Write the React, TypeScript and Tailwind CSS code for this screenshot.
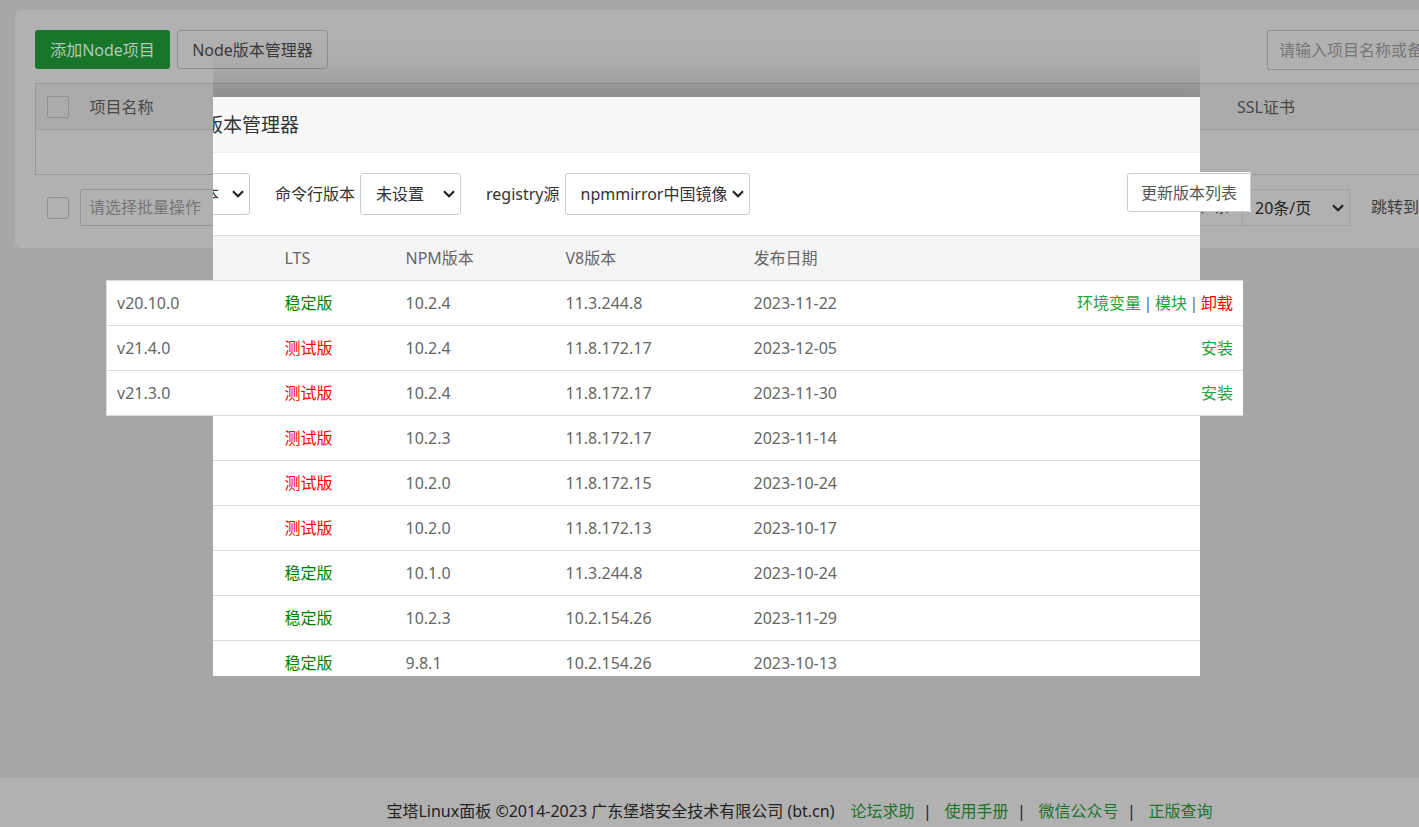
import type { ComponentProps } from "react";
import { clsx } from "clsx";

type Version = {
  name?: string;
  stable: boolean;
  npm: string;
  v8: string;
  date: string;
  installed?: boolean;
};

const versions: Version[] = [
  { name: "v20.10.0", stable: true, npm: "10.2.4", v8: "11.3.244.8", date: "2023-11-22", installed: true },
  { name: "v21.4.0", stable: false, npm: "10.2.4", v8: "11.8.172.17", date: "2023-12-05" },
  { name: "v21.3.0", stable: false, npm: "10.2.4", v8: "11.8.172.17", date: "2023-11-30" },
  { stable: false, npm: "10.2.3", v8: "11.8.172.17", date: "2023-11-14" },
  { stable: false, npm: "10.2.0", v8: "11.8.172.15", date: "2023-10-24" },
  { stable: false, npm: "10.2.0", v8: "11.8.172.13", date: "2023-10-17" },
  { stable: true, npm: "10.1.0", v8: "11.3.244.8", date: "2023-10-24" },
  { stable: true, npm: "10.2.3", v8: "10.2.154.26", date: "2023-11-29" },
  { stable: true, npm: "9.8.1", v8: "10.2.154.26", date: "2023-10-13" },
];

const footerLinks = ["论坛求助", "使用手册", "微信公众号", "正版查询"];

const Checkbox = ({ label }: { label: string }) => (
  <input
    type="checkbox"
    aria-label={label}
    className="block size-[22px] shrink-0 appearance-none rounded-xs border border-[#8f8f8f]"
  />
);

const Select = ({ className, ...props }: ComponentProps<"select">) => (
  <div className="grid items-center">
    <select
      {...props}
      className={clsx("col-start-1 row-start-1 appearance-none border", className)}
    />
    <svg
      viewBox="0 0 12 8"
      className="pointer-events-none col-start-1 row-start-1 mr-[6px] h-2 w-3 justify-self-end"
    >
      <path d="M1 1.2 6 6.2 11 1.2" fill="none" stroke="#222" strokeWidth="2.2" />
    </svg>
  </div>
);

const ProjectPanel = () => (
  <main className="mt-[10px] ml-[15px] rounded-l-md bg-[#b1b1b1] pt-5 pb-[22px] pl-5">
    <div className="flex justify-between">
      <div className="flex gap-[7px]">
        <button className="h-[39px] w-[135px] rounded-[3px] bg-[#18762a] text-[#b4c9b7]">
          添加Node项目
        </button>
        <button className="h-[39px] w-[151px] rounded-[3px] border border-[#8f8f8f] text-[#3a3a3a]">
          Node版本管理器
        </button>
      </div>
      <input
        type="text"
        aria-label="搜索项目"
        placeholder="请输入项目名称或备注"
        className="h-10 w-[152px] rounded-l-[3px] border border-r-0 border-[#8f8f8f] pl-[11px] placeholder:text-[#767676]"
      />
    </div>

    <table className="mt-[13px] w-full table-fixed border-collapse border border-r-0 border-[#979797] text-[#474747]">
      <thead>
        <tr className="h-[46px] border-b border-[#9b9b9b] bg-[#ababab] text-left">
          <th className="w-[44px] pl-[11px]">
            <Checkbox label="全选" />
          </th>
          <th className="pl-[10px] font-normal">项目名称</th>
          <th className="w-[182px] font-normal">SSL证书</th>
        </tr>
      </thead>
      <tbody>
        <tr className="h-[45px]">
          <td colSpan={3} />
        </tr>
      </tbody>
    </table>

    <div className="mt-[14px] flex items-center justify-between">
      <div className="flex items-center gap-[11px] pl-3">
        <Checkbox label="选择全部项目" />
        <select
          aria-label="批量操作"
          className="h-[37px] w-[160px] appearance-none rounded-xs border border-[#959595] pb-[2px] pl-2 text-[#767676]"
        >
          <option>请选择批量操作</option>
        </select>
      </div>
      <div className="flex h-[37px] items-center text-[#3d3d3d]">
        <span className="h-full border border-r-0 border-[#a1a1a1] px-3 pt-1">共0条</span>
        <Select
          aria-label="每页条数"
          className="h-[37px] w-[108px] border-[#a1a1a1] pl-3 text-[#222]"
        >
          <option>20条/页</option>
        </Select>
        <span className="ml-[21px] w-12 pb-[2px] whitespace-nowrap">跳转到</span>
      </div>
    </div>
  </main>
);

const VersionTable = () => (
  <table className="mt-5 w-full table-fixed border-collapse border-y border-l border-[#ddd] text-left text-[#666]">
    <thead>
      <tr className="h-[45px] bg-[#f5f5f5]">
        <th className="w-[168px]" />
        <th className="w-[121px] px-[10px] font-normal">LTS</th>
        <th className="w-[160px] px-[10px] font-normal">NPM版本</th>
        <th className="w-[188px] px-[10px] font-normal">V8版本</th>
        <th className="px-[10px] font-normal">发布日期</th>
        <th className="w-[200px]" />
      </tr>
    </thead>
    <tbody>
      {versions.map((v) => (
        <tr key={v.date + v.v8} className="h-[45px] border-t border-[#ddd]">
          <td className="px-[10px]">{v.name}</td>
          <td className={clsx("px-[10px]", v.stable ? "text-[#008000]" : "text-[#f00]")}>
            {v.stable ? "稳定版" : "测试版"}
          </td>
          <td className="px-[10px]">{v.npm}</td>
          <td className="px-[10px]">{v.v8}</td>
          <td className="px-[10px]">{v.date}</td>
          <td className="px-[10px] text-[#20a53a]">
            {v.installed && (
              <div className="flex justify-end">
                <a href="#env">环境变量</a>
                <span className="w-[14px] text-center text-[#666]">|</span>
                <a href="#modules">模块</a>
                <span className="w-[14px] text-center text-[#666]">|</span>
                <a href="#remove" className="text-[#f00]">卸载</a>
              </div>
            )}
            {v.name && !v.installed && (
              <div className="flex justify-end">
                <a href="#install">安装</a>
              </div>
            )}
          </td>
        </tr>
      ))}
    </tbody>
  </table>
);

// only the middle band, the first three rows and the update button of the dialog stay visible
const VersionManager = () => (
  <section
    role="dialog"
    aria-label="版本管理器"
    className="absolute top-[97px] right-[176px] left-[106px] h-[579px] bg-white text-[#333] shadow-[1px_1px_50px_rgba(0,0,0,0.35)] [clip-path:polygon(107px_-90px,calc(100%-43px)_-90px,calc(100%-43px)_75px,calc(100%+8px)_75px,calc(100%+8px)_115px,calc(100%-43px)_115px,calc(100%-43px)_183px,100%_183px,100%_319px,calc(100%-43px)_319px,calc(100%-43px)_100%,107px_100%,107px_319px,0_319px,0_183px,107px_183px)]"
  >
    <h2 className="flex h-14 items-center border-b border-[#eee] bg-[#f8f8f8] pt-[2px] pl-[98px] text-[19px]">
      版本管理器
    </h2>
    <div className="mt-5 -mr-2 flex items-start justify-between">
      <div className="flex items-center pl-16">
        <Select aria-label="版本类型" className="h-[42px] w-[80px] rounded-[3px] border-[#ccc] pl-4">
          <option>版本</option>
        </Select>
        <label htmlFor="cli" className="mr-[5px] ml-[25px]">命令行版本</label>
        <Select id="cli" className="h-[42px] w-[101px] rounded-[3px] border-[#ccc] pl-[15px]">
          <option>未设置</option>
        </Select>
        <label htmlFor="registry" className="mr-[5px] ml-[25px]">registry源</label>
        <Select id="registry" className="h-[42px] w-[185px] rounded-[3px] border-[#ccc] pl-[15px]">
          <option>npmmirror中国镜像</option>
        </Select>
      </div>
      <button className="h-[39px] rounded-[3px] border border-[#ccc] bg-white px-[13px] text-[#555] shadow-[0_0_0_1px_white]">
        更新版本列表
      </button>
    </div>
    <VersionTable />
  </section>
);

const Footer = () => (
  <footer className="mt-auto flex justify-center bg-[#b1b1b1] pt-[21px] pb-1 pl-[180px] whitespace-nowrap text-[#222]">
    <span className="mr-4">宝塔Linux面板 ©2014-2023 广东堡塔安全技术有限公司 (bt.cn)</span>
    {footerLinks.map((link, i) => (
      <span key={link} className="flex">
        {i > 0 && <span className="w-[30px] pr-1 text-center">|</span>}
        <a href="#footer" className="text-[#1d722e]">{link}</a>
      </span>
    ))}
  </footer>
);

const App = () => {
  return (
    <div className="relative flex min-h-screen flex-col overflow-hidden bg-[#a7a7a7] font-['Noto_Sans','Noto_Sans_CJK_SC',sans-serif] text-base">
      <ProjectPanel />
      <VersionManager />
      <Footer />
    </div>
  );
};

export default App;
